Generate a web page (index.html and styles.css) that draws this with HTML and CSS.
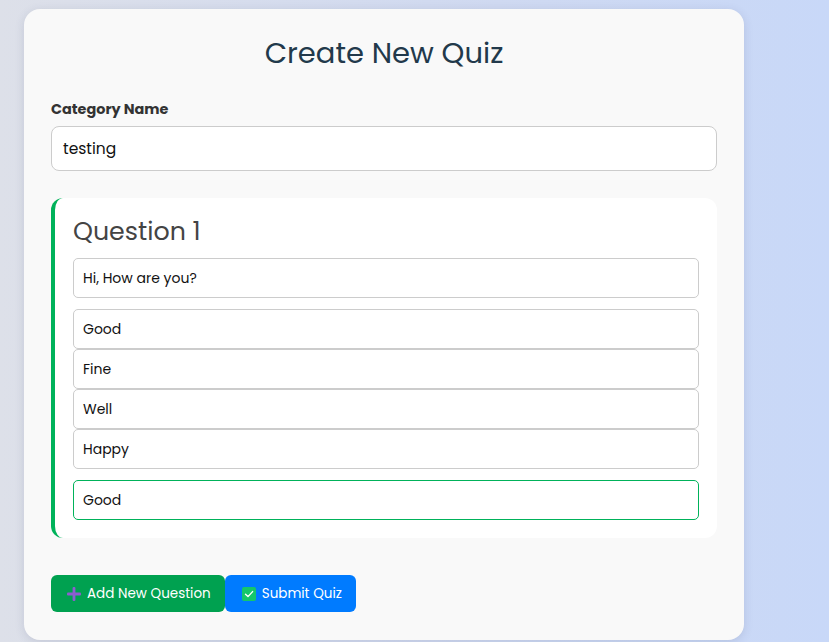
FILE: index.html
```html
<!DOCTYPE html>
<html lang="en">
<head>
<meta charset="utf-8">
<title>Create New Quiz</title>
<link rel="stylesheet" href="styles.css">
</head>
<body>
<div class="card">
  <h1 class="title">Create New Quiz</h1>
  <label class="label">Category Name</label>
  <div class="field big">testing</div>
  <div class="question">
    <h2 class="qtitle">Question 1</h2>
    <div class="field">Hi, How are you?</div>
    <div class="options">
      <div class="field">Good</div>
      <div class="field">Fine</div>
      <div class="field">Well</div>
      <div class="field">Happy</div>
    </div>
    <div class="field answer">Good</div>
  </div>
  <div class="actions">
    <button class="btn add"><svg class="ico" viewBox="0 0 14 14" width="14" height="14"><rect x="5.6" y="0" width="2.8" height="14" rx="1" fill="#8e5cd0"/><rect x="0" y="5.6" width="14" height="2.8" rx="1" fill="#8e5cd0"/></svg>Add New Question</button>
    <button class="btn submit"><svg class="ico" viewBox="0 0 14 14" width="14" height="14"><rect x="0" y="0" width="14" height="14" rx="2" fill="#14c76a"/><path d="M3.5 7.2 L6 9.6 L10.6 4.6" fill="none" stroke="#fff" stroke-width="1.4" stroke-linecap="round" stroke-linejoin="round"/></svg>Submit Quiz</button>
  </div>
</div>
</body>
</html>
```
FILE: styles.css
```css
html, body {
  margin: 0;
  height: 100%;
}
body {
  background: linear-gradient(90deg, #dde0e9 0%, #cfd9f1 60%, #c8d8f8 100%);
  font-family: "Poppins", "Open Sans", "DejaVu Sans", sans-serif;
  padding: 9px 0 0 24px;
  box-sizing: border-box;
  overflow: hidden;
}
.card {
  width: 720px;
  box-sizing: border-box;
  background: #f9f9f9;
  border-radius: 16px;
  box-shadow: 0 2px 10px rgba(60, 70, 110, 0.15);
  padding: 22px 27px 28px;
}
.title {
  margin: 0;
  text-align: center;
  font-size: 29px;
  font-weight: 400;
  color: #22394b;
  line-height: 44px;
}
.label {
  display: block;
  margin-top: 24px;
  font-size: 14.4px;
  font-weight: 700;
  color: #333;
  line-height: 20px;
}
.field {
  box-sizing: border-box;
  background: #fff;
  border: 1px solid #cccccc;
  border-radius: 5px;
  height: 40px;
  padding: 0 9px;
  display: flex;
  align-items: center;
  font-size: 14px;
  color: #111;
}
.field.big {
  margin-top: 7px;
  height: 45px;
  border-radius: 8px;
  padding: 0 11px;
  font-size: 15.5px;
}
.question {
  margin-top: 27px;
  background: #fff;
  border-left: 4px solid #00b25a;
  border-radius: 12px;
  padding: 18px 18px 18px 18px;
  display: flex;
  flex-direction: column;
  gap: 11px;
}
.qtitle {
  margin: 0 0 1px;
  font-size: 25.3px;
  font-weight: 400;
  color: #444;
  line-height: 30px;
}
.options {
  display: flex;
  flex-direction: column;
}
.answer {
  border-color: #00b25a;
}
.actions {
  margin-top: 37px;
  display: flex;
}
.btn {
  border: none;
  height: 37px;
  border-radius: 6px;
  font-family: inherit;
  font-size: 13.5px;
  color: #fff;
  display: flex;
  align-items: center;
  gap: 6px;
  padding: 0 14px 0 16px;
  white-space: nowrap;
  cursor: pointer;
}
.btn.add {
  background: #00a150;
}
.btn.submit {
  background: #007bff;
  padding-left: 17px;
  gap: 6px;
}
.ico {
  flex: none;
}
```
